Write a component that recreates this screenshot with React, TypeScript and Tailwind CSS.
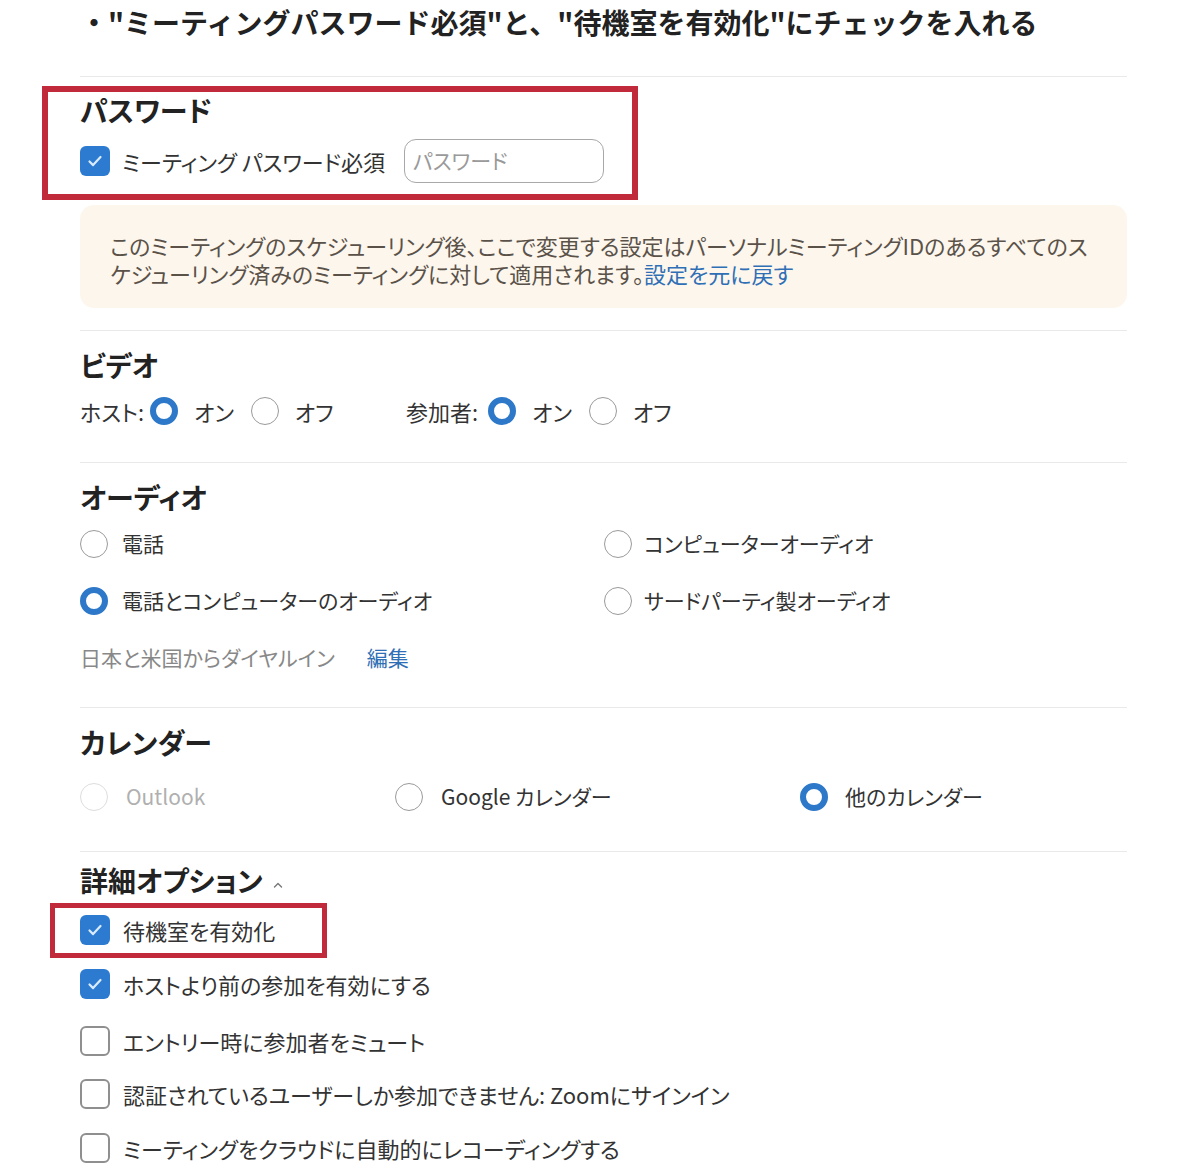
import React from "react";

const Radio = ({ on = false, disabled = false, cls = "" }: { on?: boolean; disabled?: boolean; cls?: string }) => {
  if (on)
    return <span className={`block w-[28px] h-[28px] shrink-0 rounded-full border-[6px] border-[#2d78c8] bg-white ${cls}`} />;
  return (
    <span
      className={`block w-[28px] h-[28px] shrink-0 rounded-full border-[1.5px] bg-white ${
        disabled ? "border-[#dddddd]" : "border-[#9a9a9a]"
      } ${cls}`}
    />
  );
};

const Check = ({ on = false }: { on?: boolean }) => {
  if (!on) return <span className="block w-[30px] h-[30px] shrink-0 rounded-[6px] border-2 border-[#8f8f8f] bg-white" />;
  return (
    <span className="flex items-center justify-center w-[30px] h-[30px] shrink-0 rounded-[6px] bg-[#2c7bd0]">
      <svg width="18" height="18" viewBox="0 0 18 18" fill="none">
        <path d="M3.5 9.5l3.6 3.6L14.5 5" stroke="#d9ebff" strokeWidth="2.2" strokeLinecap="round" strokeLinejoin="round" />
      </svg>
    </span>
  );
};

const Divider = ({ mt }: { mt: string }) => <div className={`${mt} border-t border-[#e9e9e9]`} />;

const Heading = ({ children, mt }: { children: React.ReactNode; mt: string }) => (
  <div className={`${mt} h-[36px] leading-[36px] text-[28px] font-bold text-[#222]`}>{children}</div>
);

const CheckRow = ({ on, label, mt }: { on?: boolean; label: string; mt: string }) => (
  <div className={`${mt} flex items-center h-[36px] gap-[13px]`}>
    <Check on={on} />
    <span className="text-[22px] text-[#333]">{label}</span>
  </div>
);

export default function App() {
  return (
    <div className="w-[1200px] h-[1167px] overflow-hidden bg-white font-['Noto_Sans_CJK_JP',sans-serif] [font-feature-settings:'palt']">
      <div className="h-[44px] pl-[80px] leading-[44px] text-[28px] font-bold text-[#222] whitespace-nowrap [font-feature-settings:normal]">
        ・"ミーティングパスワード必須"と、"待機室を有効化"にチェックを入れる
      </div>

      <div className="ml-[80px] w-[1047px]">
        <Divider mt="mt-[32px]" />

        {/* パスワード */}
        <div className="relative">
          <Heading mt="mt-[15px]">パスワード</Heading>
          <div className="mt-[11px] flex items-center h-[44px]">
            <Check on />
            <span className="ml-[12px] text-[22px] text-[#333]">ミーティング パスワード必須</span>
            <div className="ml-[19px] w-[200px] h-[44px] rounded-[12px] border-[1.5px] border-[#a8a8a8] flex items-center pl-[8px] text-[21px] text-[#9a9a9a]">
              パスワード
            </div>
          </div>
          <div className="absolute left-[-38px] top-[-6px] w-[596px] h-[114px] border-[6px] border-[#c02a3a]" />
        </div>

        <div className="mt-[22px] rounded-[14px] bg-[#fdf6ed] pt-[26px] pb-[21px] px-[30px] text-[22px] leading-[28px] text-[#5a5249] whitespace-nowrap">
          <div>このミーティングのスケジューリング後、ここで変更する設定はパーソナルミーティングIDのあるすべてのス</div>
          <div>
            ケジューリング済みのミーティングに対して適用されます。
            <span className="text-[#2f6fb5]">設定を元に戻す</span>
          </div>
        </div>

        <Divider mt="mt-[22px]" />

        {/* ビデオ */}
        <Heading mt="mt-[16px]">ビデオ</Heading>
        <div className="mt-[10px] flex items-center h-[36px] text-[22px] text-[#333]">
          <div className="flex items-center w-[326px]">
            <span>ホスト:</span>
            <Radio on cls="ml-[6px]" />
            <span className="ml-[16px]">オン</span>
            <Radio cls="ml-[17px]" />
            <span className="ml-[16px]">オフ</span>
          </div>
          <div className="flex items-center">
            <span>参加者:</span>
            <Radio on cls="ml-[10px]" />
            <span className="ml-[16px]">オン</span>
            <Radio cls="ml-[17px]" />
            <span className="ml-[16px]">オフ</span>
          </div>
        </div>

        <Divider mt="mt-[33px]" />

        {/* オーディオ */}
        <Heading mt="mt-[16px]">オーディオ</Heading>
        <div className="mt-[11px] grid grid-cols-[524px_1fr] gap-y-[21px] text-[21px] text-[#333]">
          <div className="flex items-center h-[36px] gap-[14px]"><Radio /><span>電話</span></div>
          <div className="flex items-center h-[36px] gap-[12px]"><Radio /><span>コンピューターオーディオ</span></div>
          <div className="flex items-center h-[36px] gap-[14px]"><Radio on /><span>電話とコンピューターのオーディオ</span></div>
          <div className="flex items-center h-[36px] gap-[12px]"><Radio /><span>サードパーティ製オーディオ</span></div>
          <div className="flex items-center h-[36px]">
            <span className="text-[#888]">日本と米国からダイヤルイン</span>
            <span className="ml-[32px] text-[#2f6fb5]">編集</span>
          </div>
        </div>

        <Divider mt="mt-[31px]" />

        {/* カレンダー */}
        <Heading mt="mt-[16px]">カレンダー</Heading>
        <div className="mt-[19px] grid grid-cols-[315px_405px_1fr] text-[21px] text-[#333]">
          <div className="flex items-center h-[36px] gap-[18px]"><Radio disabled /><span className="text-[#b0b0b0]">Outlook</span></div>
          <div className="flex items-center h-[36px] gap-[18px]"><Radio /><span>Google カレンダー</span></div>
          <div className="flex items-center h-[36px] gap-[17px]"><Radio on /><span>他のカレンダー</span></div>
        </div>

        <Divider mt="mt-[36px]" />

        {/* 詳細オプション */}
        <div className="mt-[10px] h-[36px] flex items-center text-[28px] font-bold text-[#222]">
          <span>詳細オプション</span>
          <svg className="ml-[10px] mt-[10px]" width="10" height="8" viewBox="0 0 10 8" fill="none">
            <path d="M1.5 6L5 2.5 8.5 6" stroke="#777" strokeWidth="1.4" strokeLinecap="round" strokeLinejoin="round" />
          </svg>
        </div>
        <div className="relative">
          <CheckRow on label="待機室を有効化" mt="mt-[14px]" />
          <div className="absolute left-[-30px] top-[-9px] w-[277px] h-[55px] border-[5px] border-[#c02a3a]" />
        </div>
        <CheckRow on label="ホストより前の参加を有効にする" mt="mt-[18px]" />
        <CheckRow label="エントリー時に参加者をミュート" mt="mt-[21px]" />
        <CheckRow label="認証されているユーザーしか参加できません: Zoomにサインイン" mt="mt-[17px]" />
        <CheckRow label="ミーティングをクラウドに自動的にレコーディングする" mt="mt-[18px]" />
      </div>
    </div>
  );
}
